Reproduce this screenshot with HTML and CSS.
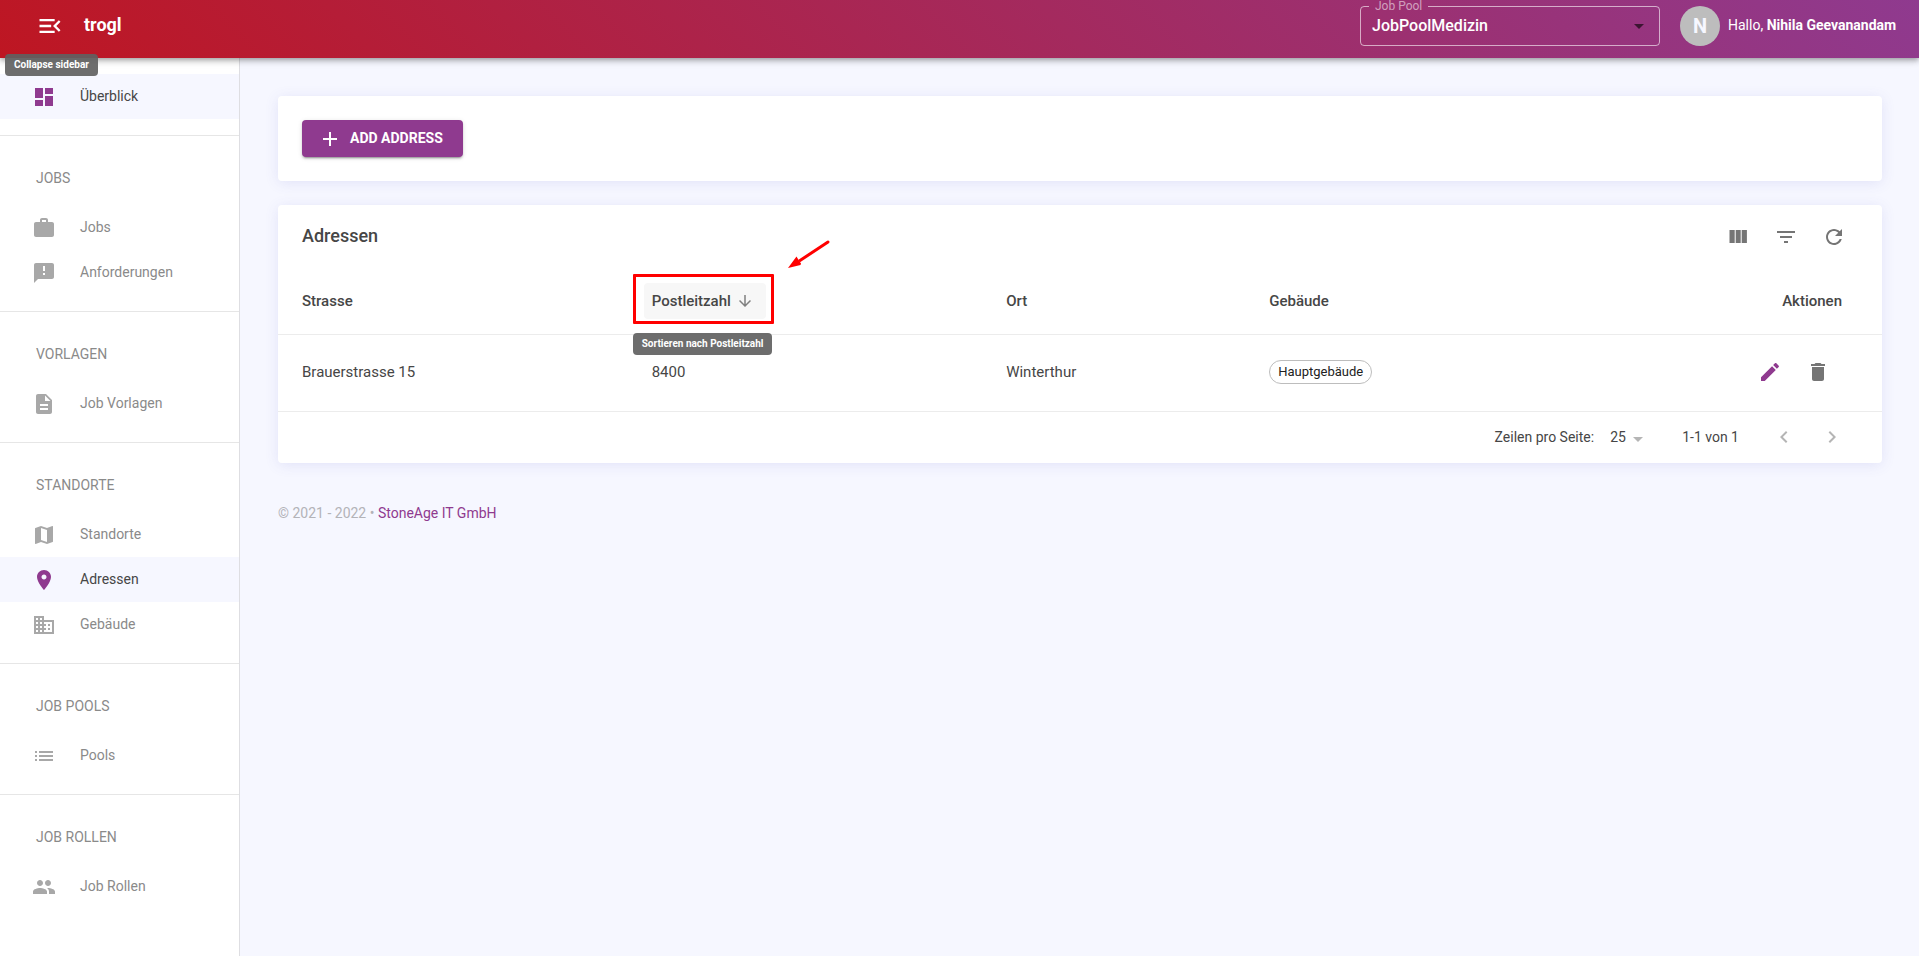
FILE: index.html
```html
<!DOCTYPE html>
<html lang="de">
<head>
<meta charset="utf-8">
<title>trogl – Adressen</title>
<link rel="stylesheet" href="styles.css">
</head>
<body>
<header class="topbar">
  <button class="menu-btn" aria-label="Collapse sidebar" aria-describedby="tip-collapse">
    <svg class="icon" viewBox="0 0 24 24"><path d="M3 18h13v-2H3v2zM3 13h10v-2H3v2zm0-7v2h13V6H3zm18 9.59L17.42 12 21 8.41 19.59 7l-5 5 5 5L21 15.59z"/></svg>
  </button>
  <span class="brand">trogl</span>
  <fieldset class="pool">
    <legend><label for="pool">Job Pool</label></legend>
    <select id="pool"><option>JobPoolMedizin</option></select>
    <svg class="icon pool-arrow" viewBox="0 0 24 24"><path d="M7 10l5 5 5-5z"/></svg>
  </fieldset>
  <span class="avatar">N</span>
  <span class="hello">Hallo, <b>Nihila Geevanandam</b></span>
  <span class="tooltip tip-collapse" id="tip-collapse" role="tooltip">Collapse sidebar</span>
</header>
<div class="shell">
  <nav class="sidebar">
    <section class="group">
      <a class="item active" href="#"><svg class="icon" viewBox="0 0 24 24"><path d="M3 13h8V3H3v10zm0 8h8v-6H3v6zm10 0h8V11h-8v10zm0-18v6h8V3h-8z"/></svg><span>Überblick</span></a>
    </section>
    <section class="group">
      <h2>JOBS</h2>
      <a class="item" href="#"><svg class="icon" viewBox="0 0 24 24"><path d="M20 6h-4V4c0-1.11-.89-2-2-2h-4c-1.11 0-2 .89-2 2v2H4c-1.11 0-1.99.89-1.99 2L2 19c0 1.11.89 2 2 2h16c1.11 0 2-.89 2-2V8c0-1.11-.89-2-2-2zm-6 0h-4V4h4v2z"/></svg><span>Jobs</span></a>
      <a class="item" href="#"><svg class="icon" viewBox="0 0 24 24"><path d="M20 2H4c-1.1 0-1.99.9-1.99 2L2 22l4-4h14c1.1 0 2-.9 2-2V4c0-1.1-.9-2-2-2zm-7 12h-2v-2h2v2zm0-4h-2V5h2v5z"/></svg><span>Anforderungen</span></a>
    </section>
    <section class="group">
      <h2>VORLAGEN</h2>
      <a class="item" href="#"><svg class="icon" viewBox="0 0 24 24"><path d="M14 2H6c-1.1 0-1.99.9-1.99 2L4 20c0 1.1.89 2 1.99 2H18c1.1 0 2-.9 2-2V8l-6-6zm2 16H8v-2h8v2zm0-4H8v-2h8v2zm-3-5V3.500L18.500 9H13z"/></svg><span>Job Vorlagen</span></a>
    </section>
    <section class="group">
      <h2>STANDORTE</h2>
      <a class="item" href="#"><svg class="icon" viewBox="0 0 24 24"><path d="M20.500 3l-.16.03L15 5.100 9 3 3.360 4.900c-.21.070-.36.250-.36.480V20.500c0 .28.220.5.500.5l.16-.03L9 18.900l6 2.100 5.640-1.900c.21-.07.360-.25.360-.48V3.500c0-.28-.22-.5-.5-.5zM15 19l-6-2.110V5l6 2.110V19z"/></svg><span>Standorte</span></a>
      <a class="item active" href="#"><svg class="icon" viewBox="0 0 24 24"><path d="M12 2C8.130 2 5 5.130 5 9c0 5.250 7 13 7 13s7-7.750 7-13c0-3.870-3.130-7-7-7zm0 9.500c-1.380 0-2.500-1.120-2.500-2.500s1.120-2.500 2.500-2.500 2.500 1.120 2.500 2.500-1.120 2.500-2.500 2.500z"/></svg><span>Adressen</span></a>
      <a class="item" href="#"><svg class="icon" viewBox="0 0 24 24"><path d="M12 7V3H2v18h20V7H12zM6 19H4v-2h2v2zm0-4H4v-2h2v2zm0-4H4V9h2v2zm0-4H4V5h2v2zm4 12H8v-2h2v2zm0-4H8v-2h2v2zm0-4H8V9h2v2zm0-4H8V5h2v2zm10 12h-8v-2h2v-2h-2v-2h2v-2h-2V9h8v10zm-2-8h-2v2h2v-2zm0 4h-2v2h2v-2z"/></svg><span>Gebäude</span></a>
    </section>
    <section class="group">
      <h2>JOB POOLS</h2>
      <a class="item" href="#"><svg class="icon" viewBox="0 0 24 24"><path d="M3 13h2v-2H3v2zm0 4h2v-2H3v2zm0-8h2V7H3v2zm4 4h14v-2H7v2zm0 4h14v-2H7v2zM7 7v2h14V7H7z"/></svg><span>Pools</span></a>
    </section>
    <section class="group">
      <h2>JOB ROLLEN</h2>
      <a class="item" href="#"><svg class="icon" viewBox="0 0 24 24"><path d="M16 11c1.660 0 2.990-1.340 2.990-3S17.660 5 16 5c-1.660 0-3 1.340-3 3s1.340 3 3 3zm-8 0c1.660 0 2.990-1.340 2.990-3S9.660 5 8 5C6.340 5 5 6.340 5 8s1.340 3 3 3zm0 2c-2.330 0-7 1.170-7 3.500V19h14v-2.500c0-2.330-4.670-3.500-7-3.500zm8 0c-.29 0-.62.020-.97.050 1.160.84 1.970 1.970 1.970 3.450V19h6v-2.500c0-2.330-4.670-3.500-7-3.500z"/></svg><span>Job Rollen</span></a>
    </section>
  </nav>
  <main class="content">
    <section class="card actions">
      <button class="add"><svg class="icon" viewBox="0 0 24 24"><path d="M19 13h-6v6h-2v-6H5v-2h6V5h2v6h6v2z"/></svg><span>ADD ADDRESS</span></button>
    </section>
    <section class="card">
      <div class="toolbar">
        <h1>Adressen</h1>
        <button class="icon-btn" aria-label="Spalten"><svg class="icon" viewBox="0 0 24 24"><path d="M3.500 5h5.200v13H3.500zM9.700 5h5v13h-5zM15.700 5h5.200v13h-5.200z"/></svg></button>
        <button class="icon-btn" aria-label="Filter"><svg class="icon" viewBox="0 0 24 24"><path d="M10 18h4v-2h-4v2zM3 6v2h18V6H3zm3 7h12v-2H6v2z"/></svg></button>
        <button class="icon-btn" aria-label="Aktualisieren"><svg class="icon" viewBox="0 0 24 24"><path d="M17.650 6.350C16.200 4.900 14.210 4 12 4c-4.420 0-7.990 3.580-7.990 8s3.570 8 7.990 8c3.730 0 6.840-2.550 7.730-6h-2.080c-.82 2.330-3.040 4-5.650 4-3.310 0-6-2.690-6-6s2.690-6 6-6c1.660 0 3.140.69 4.220 1.780L13 11h7V4l-2.350 2.350z"/></svg></button>
      </div>
      <table class="grid">
        <colgroup><col class="c-street"><col class="c-zip"><col class="c-town"><col class="c-building"><col></colgroup>
        <thead>
          <tr>
            <th>Strasse</th>
            <th>
              <div class="sort-wrap">
                <button class="sort" aria-describedby="tip-sort">Postleitzahl<svg class="icon" viewBox="0 0 24 24"><path d="M20 12l-1.410-1.410L13 16.170V4h-2v12.170l-5.580-5.590L4 12l8 8 8-8z"/></svg></button>
                <span class="marker"></span>
                <svg class="pointer" viewBox="0 0 44 30"><path class="shaft" d="M41 3L13 21.500"/><path class="head" d="M1 29L9.500 17.500L11 20L14 24.500L13.500 26z"/></svg>
                <span class="tooltip tip-sort" id="tip-sort" role="tooltip">Sortieren nach Postleitzahl</span>
              </div>
            </th>
            <th>Ort</th>
            <th>Gebäude</th>
            <th class="right">Aktionen</th>
          </tr>
        </thead>
        <tbody>
          <tr>
            <td>Brauerstrasse 15</td>
            <td>8400</td>
            <td>Winterthur</td>
            <td><span class="chip">Hauptgebäude</span></td>
            <td>
              <div class="row-actions">
                <button class="icon-btn edit" aria-label="Bearbeiten"><svg class="icon" viewBox="0 0 24 24"><path d="M3 17.250V21h3.750L17.810 9.940l-3.750-3.750L3 17.250zM20.710 7.040c.39-.39.390-1.020 0-1.410l-2.340-2.340c-.39-.39-1.020-.39-1.410 0l-1.830 1.830 3.750 3.750 1.830-1.830z"/></svg></button>
                <button class="icon-btn" aria-label="Löschen"><svg class="icon" viewBox="0 0 24 24"><path d="M6 19c0 1.100.9 2 2 2h8c1.100 0 2-.9 2-2V7H6v12zM19 4h-3.500l-1-1h-5l-1 1H5v2h14V4z"/></svg></button>
              </div>
            </td>
          </tr>
        </tbody>
      </table>
      <div class="pager">
        <label for="rows">Zeilen pro Seite:</label>
        <span class="rows"><select id="rows"><option>25</option></select><svg class="icon" viewBox="0 0 24 24"><path d="M7 10l5 5 5-5z"/></svg></span>
        <span class="range">1-1 von 1</span>
        <button class="icon-btn" disabled aria-label="Vorherige Seite"><svg class="icon" viewBox="0 0 24 24"><path d="M15.410 7.410L14 6l-6 6 6 6 1.410-1.410L10.830 12z"/></svg></button>
        <button class="icon-btn" disabled aria-label="Nächste Seite"><svg class="icon" viewBox="0 0 24 24"><path d="M10 6L8.590 7.410 13.170 12l-4.580 4.590L10 18l6-6z"/></svg></button>
      </div>
    </section>
    <footer class="foot">© 2021 - 2022 • <a href="#">StoneAge IT GmbH</a></footer>
  </main>
</div>
</body>
</html>
```
FILE: styles.css
```css
* { box-sizing: border-box; }

body {
  margin: 0;
  min-height: 100vh;
  display: flex;
  flex-direction: column;
  background: #f6f7ff;
  color: #464646;
  font: 400 14px/20px Roboto, "Liberation Sans", sans-serif;
}

button, select {
  font: inherit;
  color: inherit;
  border: 0;
  background: none;
  padding: 0;
  margin: 0;
}

a { text-decoration: none; }

.icon {
  width: 24px;
  height: 24px;
  fill: currentColor;
  flex: none;
  display: block;
}

.topbar {
  position: relative;
  z-index: 2;
  height: 58px;
  display: flex;
  align-items: flex-start;
  padding: 0 19px 0 36px;
  background: linear-gradient(45deg, #be1622, #8f3a8f);
  box-shadow: 0 2px 4px -1px rgba(0,0,0,.2), 0 4px 5px rgba(0,0,0,.14), 0 1px 10px rgba(0,0,0,.12);
  color: #fff;
}

.menu-btn { padding: 12px 0; }
.menu-btn .icon { width: 28px; height: 28px; }

.brand {
  margin-left: 20px;
  font-size: 18px;
  line-height: 24px;
  font-weight: 700;
  padding: 13px 0;
}

.pool {
  position: relative;
  width: 300px;
  height: 46px;
  margin: 0 20px 0 auto;
  padding: 0 11px;
  border: 1px solid rgba(255,255,255,.6);
  border-radius: 4px;
}

.pool legend {
  margin-left: -3px;
  padding: 0 6px;
  font-size: 12px;
  line-height: 12px;
  color: rgba(255,255,255,.55);
}

.pool select {
  display: block;
  width: 100%;
  height: 28px;
  appearance: none;
  font-size: 16px;
  font-weight: 500;
}

.pool-arrow {
  position: absolute;
  right: 8px;
  top: 2px;
  fill: rgba(0,0,0,.6);
  pointer-events: none;
}

.avatar {
  width: 40px;
  height: 40px;
  margin: 6px 8px 0 0;
  border-radius: 50%;
  background: #bdbdbd;
  color: #f6f7ff;
  font-size: 20px;
  line-height: 40px;
  font-weight: 700;
  text-align: center;
}

.hello { min-width: 172px; padding: 15px 0; }

.tooltip {
  position: absolute;
  padding: 4px 9px;
  border-radius: 4px;
  background: rgba(97,97,97,.92);
  color: #fff;
  font-size: 10px;
  line-height: 14px;
  font-weight: 700;
  white-space: nowrap;
}

.tip-collapse { left: 5px; top: 54px; }

.shell { flex: 1; display: flex; }

.sidebar {
  width: 240px;
  background: #fff;
  border-right: 1px solid #dedee2;
}

.group { padding: 16px 0; border-bottom: 1px solid #e6e6e6; }
.group:last-child { border-bottom: 0; }

.group h2 {
  margin: 0;
  padding: 16px 36px 17px;
  font-size: 14px;
  line-height: 20px;
  font-weight: 400;
  color: #8a8a8a;
}

.item {
  display: flex;
  align-items: center;
  gap: 24px;
  height: 45px;
  padding-left: 32px;
  color: #8a8a8a;
}

.item span, .add span { padding-bottom: 2px; }
.item .icon { fill: #a8a8a8; }
.item.active { background: #f6f7ff; color: #464646; }
.item.active .icon { fill: #8f3a8f; }

.content { flex: 1; padding: 38px 37px 38px 38px; }

.card {
  margin-bottom: 24px;
  border-radius: 4px;
  background: #fff;
  box-shadow: 0 2px 14px rgba(80,80,200,.12);
}

.actions { padding: 24px; }

.add {
  display: flex;
  align-items: center;
  gap: 8px;
  min-width: 161px;
  height: 37px;
  padding: 0 16px;
  border-radius: 4px;
  background: #8f3a8f;
  box-shadow: 0 3px 1px -2px rgba(0,0,0,.2), 0 2px 2px rgba(0,0,0,.14), 0 1px 5px rgba(0,0,0,.12);
  color: #fff;
  font-weight: 700;
}

.toolbar {
  display: flex;
  align-items: center;
  height: 64px;
  padding: 0 24px;
}

.toolbar h1 {
  flex: 1;
  margin: 0;
  padding-bottom: 2px;
  font-size: 18px;
  line-height: 24px;
  font-weight: 500;
}

.icon-btn { padding: 12px; color: #757575; }
.icon-btn:disabled { color: #b5b5b5; }
.icon-btn.edit { color: #8f3a8f; }

.grid {
  width: 100%;
  border-collapse: collapse;
  table-layout: fixed;
  font-size: 15px;
}

.c-street { width: 22.3%; }
.c-zip { width: 22.1%; }
.c-town { width: 16.4%; }
.c-building { width: 16%; }

.grid th, .grid td {
  padding: 0 16px;
  border-bottom: 1px solid #ececec;
  text-align: left;
}

.grid th { height: 65px; font-weight: 500; }
.grid td { height: 77px; padding-bottom: 2px; }
.grid th:first-child, .grid td:first-child { padding-left: 24px; }
.grid .right { text-align: right; padding-right: 40px; }

.sort-wrap { position: relative; width: max-content; }

.sort {
  display: flex;
  align-items: center;
  gap: 5px;
  height: 36px;
  margin-left: -8px;
  padding: 0 12px 0 8px;
  border-radius: 4px;
  background: #f7f7f7;
  font-weight: 500;
}

.sort .icon { width: 18px; height: 18px; fill: #808080; }

.marker {
  position: absolute;
  left: -19px;
  top: -9px;
  width: 141px;
  height: 50px;
  border: 3px solid #f00;
  border-radius: 1px;
}

.pointer {
  position: absolute;
  left: 135px;
  top: -44px;
  width: 44px;
  height: 30px;
}

.shaft { stroke: #f00; stroke-width: 3; stroke-linecap: round; }
.head { fill: #f00; }

.tip-sort { left: -19px; top: 50px; }

.chip {
  display: inline-block;
  padding: 0 8px;
  border: 1px solid #bdbdbd;
  border-radius: 12px;
  color: #212121;
  font-size: 13px;
  line-height: 22px;
}

.row-actions { display: flex; justify-content: flex-end; padding-right: 24px; }

.pager {
  display: flex;
  align-items: center;
  justify-content: flex-end;
  height: 51px;
  padding: 0 26px;
}

.rows { position: relative; display: flex; margin: 0 32px 0 16px; }
.rows select { width: 40px; appearance: none; }
.rows .icon { position: absolute; right: 0; top: 0; fill: #b5b5b5; pointer-events: none; }
.range { margin-right: 21px; }

.foot { margin-top: 40px; color: #b3b3b8; }
.foot a { color: #8f3a8f; }
```
